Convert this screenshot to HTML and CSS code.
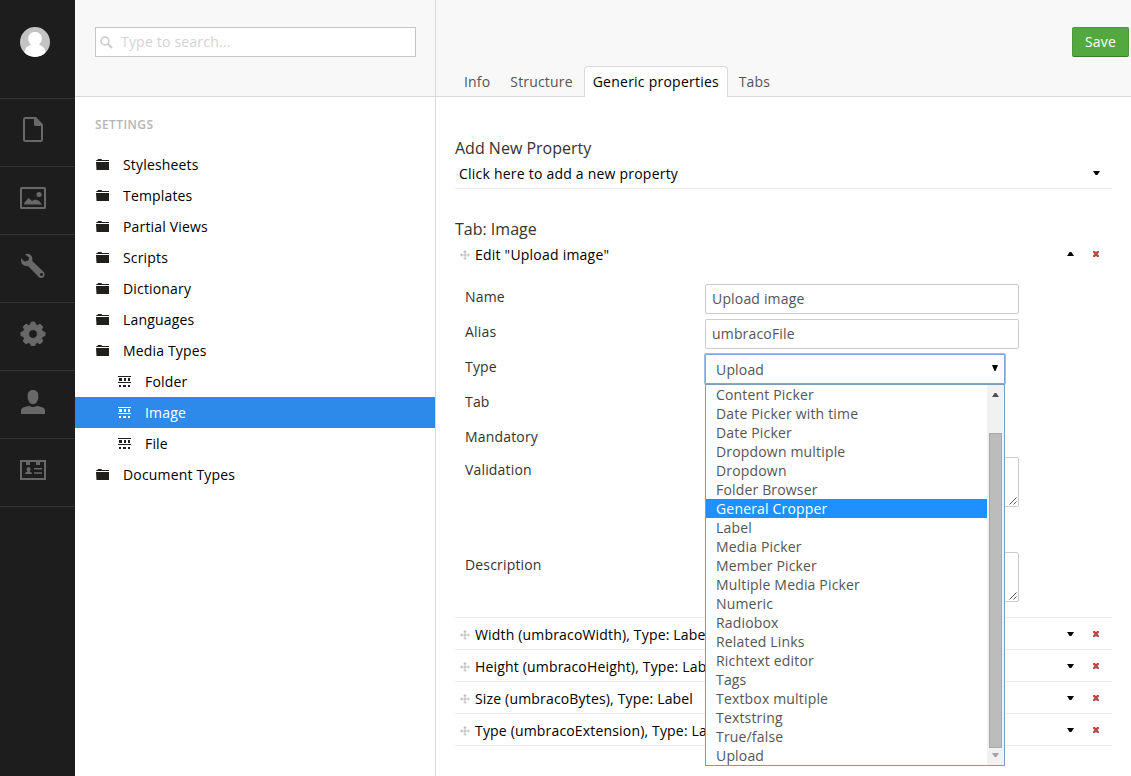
FILE: index.html
```html
<!DOCTYPE html>
<html lang="en">
<head>
<meta charset="utf-8">
<title>Media Types - Image</title>
<link rel="stylesheet" href="styles.css">
</head>
<body>
<svg class="defs" width="0" height="0">
  <symbol id="folder" viewBox="0 0 13 11"><path d="M.3 2V1h1.400V0h4v1H13v1zM0 3h13v8H.5z"/></symbol>
  <symbol id="types" viewBox="0 0 13 11"><path d="M0 0h13v1H0zM1 2h3v3H1zM6 2h2v3H6zM10 2h2v3h-2zM0 6h13v1H0zM1 9h2v2H1zM5 9h3v2H5zM10 9h2v2h-2z"/></symbol>
  <symbol id="move" viewBox="0 0 10 10"><path d="M4.500 1.500h1v3h3v1h-3v3h-1v-3h-3v-1h3zM5 0l2 2.200H3zM5 10l2-2.200H3zM0 5l2.200-2v4zM10 5L7.800 3v4z"/></symbol>
  <symbol id="down" viewBox="0 0 7 4"><path d="M0 0h7L4.300 4H2.700z"/></symbol>
  <symbol id="up" viewBox="0 0 7 4"><path d="M0 4h7L4.300 0H2.700z"/></symbol>
  <symbol id="cross" viewBox="0 0 6 6"><path d="M0 0h2l1 1.300L4 0h2v1.500L4.600 3 6 4.500V6H4L3 4.700 2 6H0V4.500L1.400 3 0 1.500z"/></symbol>
  <symbol id="grip" viewBox="0 0 8 8"><path d="M.5 7.500l7-7M4.500 7.500l3-3"/></symbol>
</svg>
<div class="app">
  <nav class="rail">
    <div class="user"><svg width="30" height="30" viewBox="0 0 30 30"><defs><clipPath id="disc"><circle cx="15" cy="15" r="15"/></clipPath></defs><g clip-path="url(#disc)"><path fill="#c3c3c3" d="M0 0h30v30H0z"/><path fill="#fff" d="M15 5c4 0 6.800 2.600 6.800 6.500 0 2.800-1 4.200-2.300 5.300v1.500c3.500.8 5 2.700 6 6.200L25 30H5l-.5-5.500c1-3.500 2.500-5.400 6-6.200v-1.500C9.200 15.700 8.200 14.300 8.200 11.500 8.200 7.600 11 5 15 5z"/></g></svg></div>
    <div class="item"><svg width="20" height="25" viewBox="0 0 20 25"><path fill="none" stroke="#686868" stroke-width="2" d="M12.500 1H2.500Q1 1 1 2.500v20Q1 24 2.500 24h15q1.500 0 1.500-1.500V8z"/><path fill="#686868" d="M11 0h1.500L20 7.500V9h-7.500q-1.500 0-1.500-1.500z"/></svg></div>
    <div class="item"><svg width="26" height="23" viewBox="0 -1 26 23"><rect x="1" y="1" width="24" height="20" rx=".5" fill="none" stroke="#686868" stroke-width="2"/><circle cx="19" cy="7.500" r="2.600" fill="#686868"/><path fill="#686868" d="M4 17.500l.5-2L8.500 11l3.500 3 3-1.500 4 1.200 3 3.800z"/></svg></div>
    <div class="item"><svg width="26" height="25" viewBox="0 0 26 25"><path fill="#686868" fill-rule="evenodd" d="M5 1.200Q9.500 0 11.700 3.200q1 2 .6 4.800L23.500 18.700q1.700 2 .8 4.300-1.200 2.200-3.800 2-1-.2-1.800-1L8.300 13.200Q4.500 13.500 2.500 11.500.5 9.200 1.200 5.200L4.500 8.600 8.500 7.500 9 4.500zM21.500 20a1.500 1.500 0 1 0 .01 0z"/></svg></div>
    <div class="item"><svg width="26" height="25" viewBox="0 0 26 25"><path fill="#686868" fill-rule="evenodd" d="M10.600 3.500l.7-2.500h3.400l.7 2.500 2.300 1L20 3.100 22.900 6l-1.400 2.300 1 2.300 2.500.7v3.400l-2.500.7-1 2.300 1.400 2.300L20 22.900l-2.300-1.400-2.300 1-.7 2.500h-3.400l-.7-2.500-2.300-1L6 22.900 3.100 20l1.400-2.300-1-2.300L1 14.700v-3.400l2.500-.7 1-2.300L3.100 6 6 3.100l2.300 1.400zM13 8.600a4.400 4.400 0 1 0 .01 0z" stroke="#686868" stroke-width="1" stroke-linejoin="round"/></svg></div>
    <div class="item"><svg width="24" height="25" viewBox="0 -1 24 25"><path fill="#686868" d="M12 0c3.600 0 5.400 2.300 5.400 6.200 0 4.500-2.500 8-5.400 8s-5.400-3.500-5.400-8C6.600 2.300 8.400 0 12 0zM8.200 15.800q3.800 2.400 7.600 0l6.200 1.600q2 .8 2 3V24H0v-3.600q0-2.200 2-3z"/></svg></div>
    <div class="item"><svg width="26" height="21" viewBox="0 -1 26 21"><path fill="none" stroke="#686868" stroke-width="2" d="M1 1h24v18H1z"/><path fill="#686868" d="M6 0h4v5H6zM16 0h4v5h-4zM14 8h8v1.400h-8zM14 12.300h8v1.400h-8zM8.500 7q2 0 2 2.200T9.300 11.500q2.700.4 2.700 2.500H5Q5 11.900 7.700 11.500 6.500 11.200 6.500 9.200T8.500 7z"/></svg></div>
  </nav>

  <aside class="side">
    <div class="side-head">
      <div class="search"><svg width="13" height="13" viewBox="0 0 13 13"><circle cx="5" cy="5" r="3.900" fill="none" stroke="#ccc" stroke-width="1.600"/><path stroke="#ccc" stroke-width="2.200" d="M8 8l4 4"/></svg><span>Type to search...</span></div>
    </div>
    <div class="tree">
      <h5>SETTINGS</h5>
      <div class="node"><svg width="13" height="11"><use href="#folder"/></svg><span>Stylesheets</span></div>
      <div class="node"><svg width="13" height="11"><use href="#folder"/></svg><span>Templates</span></div>
      <div class="node"><svg width="13" height="11"><use href="#folder"/></svg><span>Partial Views</span></div>
      <div class="node"><svg width="13" height="11"><use href="#folder"/></svg><span>Scripts</span></div>
      <div class="node"><svg width="13" height="11"><use href="#folder"/></svg><span>Dictionary</span></div>
      <div class="node"><svg width="13" height="11"><use href="#folder"/></svg><span>Languages</span></div>
      <div class="node"><svg width="13" height="11"><use href="#folder"/></svg><span>Media Types</span></div>
      <div class="node child"><svg width="13" height="11"><use href="#types"/></svg><span>Folder</span></div>
      <div class="node child current"><svg width="13" height="11"><use href="#types"/></svg><span>Image</span></div>
      <div class="node child"><svg width="13" height="11"><use href="#types"/></svg><span>File</span></div>
      <div class="node"><svg width="13" height="11"><use href="#folder"/></svg><span>Document Types</span></div>
    </div>
  </aside>

  <main class="main">
    <header class="head">
      <div class="actions"><div class="save">Save</div></div>
      <div class="tabs">
        <div class="tab">Info</div><div class="tab">Structure</div><div class="tab active">Generic properties</div><div class="tab">Tabs</div>
      </div>
    </header>
    <div class="content">
      <h2>Add New Property</h2>
      <div class="row add"><span class="title">Click here to add a new property</span><svg class="arrow" width="7" height="4"><use href="#down"/></svg></div>
      <h2 class="second">Tab: Image</h2>
      <div class="row edit"><svg class="move" width="10" height="10"><use href="#move"/></svg><span class="title">Edit "Upload image"</span><svg class="arrow" width="7" height="4"><use href="#up"/></svg><svg class="cross" width="6" height="6"><use href="#cross"/></svg></div>
      <div class="form">
        <div class="field"><label>Name</label><div class="input">Upload image</div></div>
        <div class="field"><label>Alias</label><div class="input">umbracoFile</div></div>
        <div class="field"><label>Type</label>
          <div class="picker">
            <div class="select"><span>Upload</span><svg width="6" height="6" viewBox="0 0 6 6"><path d="M0 0h6L3.500 6h-1z"/></svg></div>
            <div class="menu">
              <div class="options">
                <div>Content Picker</div><div>Date Picker with time</div><div>Date Picker</div><div>Dropdown multiple</div><div>Dropdown</div><div>Folder Browser</div><div class="hot">General Cropper</div><div>Label</div><div>Media Picker</div><div>Member Picker</div><div>Multiple Media Picker</div><div>Numeric</div><div>Radiobox</div><div>Related Links</div><div>Richtext editor</div><div>Tags</div><div>Textbox multiple</div><div>Textstring</div><div>True/false</div><div>Upload</div>
              </div>
              <div class="bar"><svg width="7" height="4"><use href="#up"/></svg><div class="thumb"></div><svg class="dim" width="7" height="4"><use href="#down"/></svg></div>
            </div>
          </div>
        </div>
        <div class="field"><label>Tab</label></div>
        <div class="field short"><label>Mandatory</label></div>
        <div class="field tall"><label>Validation</label><div class="area"><svg width="8" height="8"><use href="#grip"/></svg></div></div>
        <div class="field last"><label>Description</label><div class="area"><svg width="8" height="8"><use href="#grip"/></svg></div></div>
      </div>
      <div class="row prop"><svg class="move" width="10" height="10"><use href="#move"/></svg><span class="title">Width (umbracoWidth), Type: Label</span><svg class="arrow" width="7" height="4"><use href="#down"/></svg><svg class="cross" width="6" height="6"><use href="#cross"/></svg></div>
      <div class="row prop"><svg class="move" width="10" height="10"><use href="#move"/></svg><span class="title">Height (umbracoHeight), Type: Label</span><svg class="arrow" width="7" height="4"><use href="#down"/></svg><svg class="cross" width="6" height="6"><use href="#cross"/></svg></div>
      <div class="row prop"><svg class="move" width="10" height="10"><use href="#move"/></svg><span class="title">Size (umbracoBytes), Type: Label</span><svg class="arrow" width="7" height="4"><use href="#down"/></svg><svg class="cross" width="6" height="6"><use href="#cross"/></svg></div>
      <div class="row prop"><svg class="move" width="10" height="10"><use href="#move"/></svg><span class="title">Type (umbracoExtension), Type: Label</span><svg class="arrow" width="7" height="4"><use href="#down"/></svg><svg class="cross" width="6" height="6"><use href="#cross"/></svg></div>
    </div>
  </main>
</div>
</body>
</html>
```

FILE: styles.css
```css
* { box-sizing: border-box; }
body { margin: 0; background: #fff; color: #000; font: 14px/20px "Open Sans", sans-serif; letter-spacing: .17px; overflow: hidden; }
svg { display: block; flex: none; }
.defs { display: none; }
.app { display: flex; width: 1131px; height: 776px; }

.rail { width: 75px; background: #1d1d1d; flex: none; }
.user { height: 99px; padding: 27px 0 0 20px; border-bottom: 1px solid #343434; }
.item { height: 68px; padding: 0 9px 6px 0; display: flex; align-items: center; justify-content: center; border-bottom: 1px solid #343434; }

.side { width: 361px; border-right: 1px solid #d9d9d9; flex: none; }
.side-head { height: 97px; padding: 27px 19px 0 20px; background: #f8f8f8; border-bottom: 1px solid #d9d9d9; }
.search { height: 30px; display: flex; align-items: center; gap: 8px; padding-left: 4px; border: 1px solid #c6c6c6; background: #fff; color: #d3d3d3; letter-spacing: .2px; }
h5 { margin: 0; padding: 18px 20px 0; height: 52px; font-size: 12px; line-height: 20px; font-weight: 600; color: #b5b5b5; letter-spacing: .4px; }
.node { height: 31px; display: flex; align-items: center; gap: 14px; padding-left: 21px; }
.node svg { fill: #201f1b; }
.child { padding-left: 43px; }
.current { background: #2e8aea; color: #fff; }
.current svg { fill: #fff; }

.main { flex: 1; min-width: 0; }
.head { height: 97px; background: #f8f8f8; border-bottom: 1px solid #d9d9d9; padding-top: 27px; }
.actions { display: flex; justify-content: flex-end; padding-right: 2px; height: 39px; }
.save { width: 57px; height: 30px; line-height: 28px; text-align: center; color: #fff; background: #53a93f; border: 1px solid #4a9838; border-bottom-color: #3b7a2d; border-radius: 2px; }
.tabs { display: flex; gap: 2px; padding-left: 19px; height: 31px; }
.tab { height: 31px; padding: 5px 8px 0; border: 1px solid transparent; border-bottom: 0; color: #555; }
.tab.active { width: 144px; color: #000; background: #fff; border-color: #d9d9d9; border-radius: 4px 4px 0 0; letter-spacing: .24px; white-space: nowrap; }

.content { padding: 41px 19px 0; }
h2 { margin: 0; font-size: 16px; line-height: 20px; font-weight: 400; color: #333; letter-spacing: 0; }
h2.second { margin-top: 30px; }
.row { height: 32px; display: flex; align-items: center; padding: 0 13px 0 5px; border-bottom: 1px solid #ececec; }
.row .move { fill: #bbb; margin: 2px 5px 0 0; }
.row .title { flex: 1; padding-top: 2px; white-space: nowrap; }
.row .cross { fill: #b94a48; margin-left: 19px; }
.row.add { height: 31px; padding: 0 12px 0 4px; letter-spacing: .22px; }
.row.edit { border: 0; height: 30px; letter-spacing: .22px; }
.row.prop .move { margin-top: 3px; }
.row.prop .arrow, .row.prop .cross { margin-top: 1px; }

.form { padding: 15px 0 0 10px; height: 349px; border-bottom: 1px solid #ececec; color: #333; }
.field { display: flex; height: 35px; }
.field label { width: 240px; line-height: 26px; }
.field.short { height: 33px; }
.field.tall { height: 95px; }
.input { width: 314px; height: 30px; padding: 0 6px; line-height: 28px; border: 1px solid #ccc; border-radius: 2px; color: #555; }
.area { width: 314px; height: 50px; border: 1px solid #ccc; border-radius: 2px; display: flex; justify-content: flex-end; align-items: flex-end; padding: 1px; }
.area svg { stroke: #555; fill: none; }
.picker { position: relative; width: 300px; height: 30px; }
.select { width: 300px; height: 30px; display: flex; align-items: center; justify-content: space-between; padding: 2px 7px 0 11px; box-shadow: inset 0 0 0 1px #7fa5e8, 0 0 0 1px #9dbcf5; border-radius: 1px; color: #555; }
.select svg { fill: #000; margin-bottom: 4px; }
.menu { position: absolute; left: 0; top: 30px; width: 300px; height: 382px; border: 1px solid #7c9cbb; background: #fff; display: flex; z-index: 2; }
.options { flex: 1; color: #555; }
.options div { height: 19px; line-height: 19px; padding-left: 10px; white-space: nowrap; }
.options .hot { background: #1e90ff; color: #fff; }
.bar { width: 17px; background: #f1f1f1; display: flex; flex-direction: column; align-items: center; padding-top: 8px; }
.bar svg { fill: #505050; }
.bar .thumb { width: 13px; height: 315px; margin: 36px 0 5px; border: 1px solid #a8a8a8; background: #bcbcbc; }
.bar .dim { fill: #a3a3a3; }
```
